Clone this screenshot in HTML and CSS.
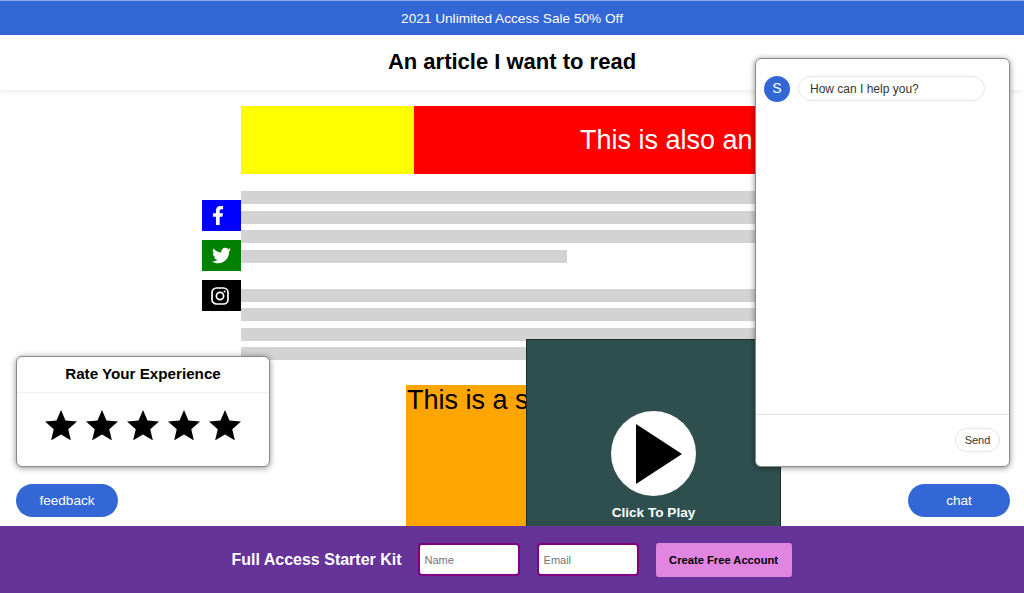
FILE: index.html
```html
<!DOCTYPE html>
<html lang="en">
<head>
  <meta charset="UTF-8">
  <meta name="viewport" content="width=device-width, initial-scale=1.0">
  <title>An article I want to read</title>
  <link rel="stylesheet" href="styles.css">
</head>
<body>
  <div class="banner">2021 Unlimited Access Sale 50% Off</div>

  <header class="site-header">
    <h1>An article I want to read</h1>
  </header>

  <main class="content">
    <div class="article">
      <div class="top-ad">
        <div class="top-ad-side"></div>
        <div class="top-ad-main">This is also an ad</div>
      </div>

      <div class="paragraph">
        <div class="text-line"></div>
        <div class="text-line"></div>
        <div class="text-line"></div>
        <div class="text-line short"></div>
      </div>
      <div class="paragraph">
        <div class="text-line"></div>
        <div class="text-line"></div>
        <div class="text-line"></div>
        <div class="text-line"></div>
      </div>

      <div class="square-ad">This is a square ad</div>
    </div>
  </main>

  <div class="social">
    <a class="social-btn facebook">
      <svg viewBox="0 0 320 512" width="12" height="19"><path fill="#fff" d="M279.14 288l14.22-92.66h-88.91v-60.13c0-25.35 12.42-50.06 52.24-50.06h40.42V6.26S260.43 0 225.36 0c-73.22 0-121.08 44.38-121.08 124.72v70.62H22.89V288h81.39v224h100.17V288z"/></svg>
    </a>
    <a class="social-btn twitter">
      <svg viewBox="0 0 512 512" width="19" height="19"><path fill="#fff" d="M459.37 151.716c.325 4.548.325 9.097.325 13.645 0 138.72-105.583 298.558-298.558 298.558-59.452 0-114.68-17.219-161.137-47.106 8.447.974 16.568 1.299 25.34 1.299 49.055 0 94.213-16.568 130.274-44.832-46.132-.975-84.792-31.188-98.112-72.772 6.498.974 12.995 1.624 19.818 1.624 9.421 0 18.843-1.3 27.614-3.573-48.081-9.747-84.143-51.98-84.143-102.985v-1.299c13.969 7.797 30.214 12.67 47.431 13.319-28.264-18.843-46.781-51.005-46.781-87.391 0-19.492 5.197-37.36 14.294-52.954 51.655 63.675 129.3 105.258 216.365 109.807-1.624-7.797-2.599-15.918-2.599-24.04 0-57.828 46.782-104.934 104.934-104.934 30.213 0 57.502 12.67 76.67 33.137 23.715-4.548 46.456-13.32 66.599-25.34-7.798 24.366-24.366 44.833-46.132 57.827 21.117-2.273 41.584-8.122 60.426-16.243-14.292 20.791-32.161 39.308-52.628 54.253z"/></svg>
    </a>
    <a class="social-btn instagram">
      <svg viewBox="0 0 18 18" width="18" height="18" fill="none" stroke="#fff" stroke-width="1.7"><rect x="1" y="1" width="16" height="16" rx="4.5"/><circle cx="9" cy="9" r="3.6"/><circle cx="13.6" cy="4.4" r="1" fill="#fff" stroke="none"/></svg>
    </a>
  </div>

  <div class="video">
    <div class="play-circle">
      <svg viewBox="0 0 46 60" width="46" height="60"><polygon points="0,0 46,30 0,60" fill="#000"/></svg>
    </div>
    <div class="video-label">Click To Play</div>
  </div>

  <section class="rate-box">
    <div class="rate-title">Rate Your Experience</div>
    <div class="stars">
      <svg class="star" viewBox="2 2 20 19"><path d="M12 17.27L18.18 21l-1.64-7.03L22 9.24l-7.19-.61L12 2 9.19 8.63 2 9.24l5.46 4.73L5.82 21z"/></svg>
      <svg class="star" viewBox="2 2 20 19"><path d="M12 17.27L18.18 21l-1.64-7.03L22 9.24l-7.19-.61L12 2 9.19 8.63 2 9.24l5.46 4.73L5.82 21z"/></svg>
      <svg class="star" viewBox="2 2 20 19"><path d="M12 17.27L18.18 21l-1.64-7.03L22 9.24l-7.19-.61L12 2 9.19 8.63 2 9.24l5.46 4.73L5.82 21z"/></svg>
      <svg class="star" viewBox="2 2 20 19"><path d="M12 17.27L18.18 21l-1.64-7.03L22 9.24l-7.19-.61L12 2 9.19 8.63 2 9.24l5.46 4.73L5.82 21z"/></svg>
      <svg class="star" viewBox="2 2 20 19"><path d="M12 17.27L18.18 21l-1.64-7.03L22 9.24l-7.19-.61L12 2 9.19 8.63 2 9.24l5.46 4.73L5.82 21z"/></svg>
    </div>
  </section>

  <section class="chat-box">
    <div class="chat-messages">
      <div class="avatar">S</div>
      <div class="bubble">How can I help you?</div>
    </div>
    <div class="chat-input">
      <button class="send-btn">Send</button>
    </div>
  </section>

  <button class="pill-btn feedback-btn">feedback</button>
  <button class="pill-btn chat-btn">chat</button>

  <footer class="signup">
    <span class="signup-title">Full Access Starter Kit</span>
    <input class="signup-input" type="text" placeholder="Name">
    <input class="signup-input" type="text" placeholder="Email">
    <button class="signup-btn">Create Free Account</button>
  </footer>
</body>
</html>
```

FILE: styles.css
```css
* {
  margin: 0;
  padding: 0;
  box-sizing: border-box;
}

html, body {
  height: 100%;
  overflow: hidden;
}

body {
  font-family: 'Liberation Sans', Arial, sans-serif;
  background: white;
  color: black;
  display: flex;
  flex-direction: column;
  position: relative;
}

.banner {
  height: 35px;
  background: #3367d6;
  border-top: 1px solid #8fa9e6;
  color: white;
  font-size: 13.65px;
  display: flex;
  align-items: center;
  justify-content: center;
  flex-shrink: 0;
}

.site-header {
  height: 55px;
  background: white;
  box-shadow: 0 2px 6px rgba(0, 0, 0, 0.08);
  display: flex;
  align-items: center;
  justify-content: center;
  flex-shrink: 0;
  position: relative;
}

h1 {
  font-size: 22px;
  font-weight: 700;
  margin-top: -1px;
}

.content {
  flex: 1;
  overflow: hidden;
  padding: 16px 0 0 241px;
}

.article {
  width: 540px;
}

.top-ad {
  width: 728px;
  height: 68px;
  display: flex;
  margin-bottom: 17px;
}

.top-ad-side {
  width: 173px;
  background: yellow;
}

.top-ad-main {
  flex: 1;
  background: red;
  color: white;
  font-size: 27px;
  line-height: 69px;
  padding-left: 166px;
  white-space: nowrap;
}

.paragraph {
  margin-bottom: 26px;
}

.text-line {
  height: 13px;
  background: lightgray;
  margin-bottom: 6.5px;
}

.text-line.short {
  width: 326px;
}

.square-ad {
  width: 300px;
  height: 250px;
  margin: -1px 0 0 165px;
  background: orange;
  font-size: 27px;
  line-height: 31px;
  padding-left: 1px;
  white-space: nowrap;
}

.social {
  position: absolute;
  left: 202px;
  top: 200px;
  display: flex;
  flex-direction: column;
  gap: 9px;
}

.social-btn {
  width: 39px;
  height: 31px;
  padding-right: 3px;
  display: flex;
  align-items: center;
  justify-content: center;
}

.facebook { background: blue; padding-right: 8px; }
.twitter { background: green; padding-right: 1px; }
.instagram { background: black; }

.video {
  position: absolute;
  left: 526px;
  top: 339px;
  width: 255px;
  height: 187px;
  background: darkslategray;
  border: 1px solid #1a2e2e;
  border-bottom: 0;
  display: flex;
  flex-direction: column;
  align-items: center;
  justify-content: flex-end;
  padding-bottom: 5px;
}

.play-circle {
  width: 85px;
  height: 85px;
  border-radius: 50%;
  background: white;
  display: flex;
  align-items: center;
  padding-left: 25px;
  margin-bottom: 9px;
}

.video-label {
  color: white;
  font-size: 13.6px;
  font-weight: 700;
  line-height: 16px;
}

.rate-box {
  position: absolute;
  left: 16px;
  top: 356px;
  width: 254px;
  height: 111px;
  background: white;
  border: 1px solid #8a8a8a;
  border-radius: 6px;
  box-shadow: 0 1px 6px rgba(0, 0, 0, 0.45);
}

.rate-title {
  height: 36px;
  border-bottom: 1px solid #eee;
  font-size: 15.2px;
  font-weight: 700;
  text-align: center;
  line-height: 33px;
}

.stars {
  display: flex;
  justify-content: center;
  gap: 9px;
  padding-top: 17px;
}

.star {
  width: 32px;
  height: 30.4px;
}

.chat-box {
  position: absolute;
  left: 755px;
  top: 58px;
  width: 255px;
  height: 409px;
  background: white;
  border: 1px solid #8a8a8a;
  border-radius: 6px;
  box-shadow: 0 1px 6px rgba(0, 0, 0, 0.45);
  display: flex;
  flex-direction: column;
}

.chat-messages {
  flex: 1;
  display: flex;
  align-items: flex-start;
  gap: 8px;
  padding: 17px 0 0 8px;
}

.avatar {
  width: 26px;
  height: 26px;
  border-radius: 50%;
  background: #3367d6;
  color: white;
  font-size: 14px;
  text-align: center;
  line-height: 25px;
}

.bubble {
  width: 187px;
  height: 25px;
  border: 1px solid #e5e5e5;
  border-radius: 13px;
  font-size: 12px;
  color: #333;
  line-height: 25px;
  padding-left: 11px;
}

.chat-input {
  height: 52px;
  border-top: 1px solid #e0e0e0;
  display: flex;
  justify-content: flex-end;
  padding: 13px 9px 0 0;
}

.send-btn {
  width: 45px;
  height: 24px;
  background: white;
  border: 1px solid #e5e5e5;
  border-radius: 12px;
  font-family: inherit;
  font-size: 11px;
  color: #333;
}

.pill-btn {
  position: absolute;
  top: 484px;
  width: 102px;
  height: 33px;
  background: #3367d6;
  border: 0;
  border-radius: 17px;
  color: white;
  font-family: inherit;
  font-size: 13.6px;
}

.feedback-btn { left: 16px; }
.chat-btn { left: 908px; }

.signup {
  height: 67px;
  flex-shrink: 0;
  background: rebeccapurple;
  position: relative;
  display: flex;
  align-items: center;
  justify-content: center;
  gap: 17px;
  padding-right: 1px;
}

.signup-title {
  color: white;
  font-size: 16px;
  font-weight: 700;
  margin-right: -1px;
}

.signup-input {
  width: 102px;
  height: 33px;
  border: 2px solid purple;
  border-radius: 4px;
  background: white;
  font-family: inherit;
  font-size: 11px;
  padding-left: 5px;
}

.signup-btn {
  width: 136px;
  height: 34px;
  background: #e085e0;
  border: 0;
  border-radius: 3px;
  font-family: inherit;
  font-size: 11.2px;
  font-weight: 700;
  color: black;
}
```
